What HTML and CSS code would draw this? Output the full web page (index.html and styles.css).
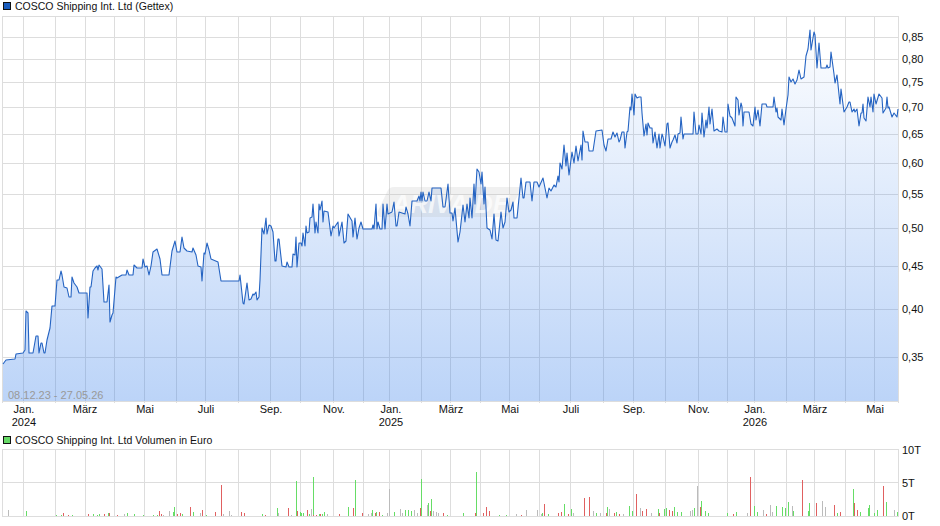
FILE: index.html
```html
<!DOCTYPE html>
<html>
<head>
    <title>COSCO Shipping Int. Ltd (Gettex)</title>
    <meta name="viewport" content="width=device-width, initial-scale=1">
    <link rel="stylesheet" href="styles.css">
</head>
<body>
    <main class="page">
        <div class="legend legendPrice">
            <span class="swatch swatchBlue"></span>
            <span>COSCO Shipping Int. Ltd (Gettex)</span>
        </div>
        <svg class="chart chartPrice" viewBox="0 16 940 418">
            <defs>
                <linearGradient id="areaFill" gradientUnits="userSpaceOnUse" x1="0" y1="16" x2="0" y2="401">
                    <stop offset="0" stop-color="#3f84eb" stop-opacity="0"></stop>
                    <stop offset="1" stop-color="#3f84eb" stop-opacity="0.35"></stop>
                </linearGradient>
            </defs>
            <g id="priceGrid" class="grid"></g>
            <path id="priceArea" class="area"></path>
            <g class="watermark">
                <path class="watermarkBand" d="M394 187H522L507 217H382Q376 217 378 211L387 192Q389 187 394 187Z"></path>
                <text class="watermarkText" x="392" y="213">ARIVA.DE</text>
            </g>
            <path id="priceLine" class="line"></path>
            <text class="dateRange" x="8" y="399">08.12.23 - 27.05.26</text>
            <g class="axisY">
                <text x="902" y="41">0,85</text>
                <text x="902" y="63">0,80</text>
                <text x="902" y="86">0,75</text>
                <text x="902" y="111">0,70</text>
                <text x="902" y="138">0,65</text>
                <text x="902" y="167">0,60</text>
                <text x="902" y="198">0,55</text>
                <text x="902" y="232">0,50</text>
                <text x="902" y="270">0,45</text>
                <text x="902" y="313">0,40</text>
                <text x="902" y="361">0,35</text>
            </g>
            <g class="axisX">
                <text x="24" y="413">Jan.</text>
                <text x="24" y="426">2024</text>
                <text x="85" y="413">März</text>
                <text x="145" y="413">Mai</text>
                <text x="206" y="413">Juli</text>
                <text x="271" y="413">Sep.</text>
                <text x="334" y="413">Nov.</text>
                <text x="391" y="413">Jan.</text>
                <text x="391" y="426">2025</text>
                <text x="451" y="413">März</text>
                <text x="510" y="413">Mai</text>
                <text x="571" y="413">Juli</text>
                <text x="634" y="413">Sep.</text>
                <text x="699" y="413">Nov.</text>
                <text x="755" y="413">Jan.</text>
                <text x="755" y="426">2026</text>
                <text x="815" y="413">März</text>
                <text x="875" y="413">Mai</text>
            </g>
        </svg>
        <div class="legend legendVolume">
            <span class="swatch swatchGreen"></span>
            <span>COSCO Shipping Int. Ltd Volumen in Euro</span>
        </div>
        <svg class="chart chartVolume" viewBox="0 446 940 80">
            <g id="volumeGrid" class="grid"></g>
            <path id="barsGray" class="bars barsGray"></path>
            <path id="barsGreen" class="bars barsGreen"></path>
            <path id="barsRed" class="bars barsRed"></path>
            <g class="axisY">
                <text x="902" y="454">10T</text>
                <text x="902" y="487">5T</text>
                <text x="902" y="520">0T</text>
            </g>
        </svg>
    </main>
    <script src="script.js"></script>
</body>
</html>
```

FILE: styles.css
```css
body {
    background-color: white;
    color: #111;
    font-family: "Liberation Sans", Arial, sans-serif;
    font-size: 10.5px;
    margin: 0;
}

.page {
    display: flex;
    flex-direction: column;
    width: 940px;
}

.legend {
    display: flex;
    align-items: center;
    gap: 4px;
    padding-left: 3px;
    box-sizing: border-box;
}

.legendPrice {
    height: 16px;
    padding-bottom: 4px;
}

.legendVolume {
    height: 12px;
}

.swatch {
    width: 6px;
    height: 6px;
    border: 1px solid #111;
}

.swatchBlue {
    background-color: #1a5dbe;
}

.swatchGreen {
    background-color: #66d966;
}

.chart {
    display: block;
    width: 940px;
    overflow: visible;
}

.chartPrice {
    height: 418px;
}

.chartVolume {
    height: 80px;
}

.grid line {
    stroke: #ddd;
    stroke-width: 1;
    shape-rendering: crispEdges;
}

.area {
    fill: url(#areaFill);
}

.line {
    fill: none;
    stroke: #2463c2;
    stroke-width: 1.1;
    stroke-linejoin: round;
}

.bars {
    fill: none;
    stroke-width: 1;
    shape-rendering: crispEdges;
}

.barsGray {
    stroke: #bbb;
}

.barsGreen {
    stroke: #66dd66;
}

.barsRed {
    stroke: #e06060;
}

.watermarkBand {
    fill: rgba(185, 185, 185, 0.22);
}

.watermarkText {
    fill: rgba(255, 255, 255, 0.7);
    font-size: 25px;
    font-style: italic;
    font-weight: bold;
}

.dateRange {
    fill: #999;
    font-size: 11px;
}

.axisY text,
.axisX text {
    fill: #111;
    font-size: 11px;
}

.axisX text {
    text-anchor: middle;
}
```

FILE: script.js
```js
const gridX = [2, 23, 55, 85, 114, 144, 176, 205, 238, 270, 300, 333, 363, 389, 421, 450, 480, 509, 539, 570, 603, 633, 665, 698, 727, 754, 786, 814, 845, 874, 898];
const priceGridY = [16, 37, 59, 82, 107, 134, 163, 194, 228, 266, 309, 357, 401];
const volumeGridY = [449, 482, 516];

const pricePoints = [
    3,364, 6,360, 15,359, 16,354, 23,353, 25,350, 26,311, 28,313, 29,353, 33,353, 36,336, 38,336, 39,353, 41,343, 42,343, 44,353, 45,353, 47,340, 50,328, 52,306,
    55,306, 57,280, 59,280, 61,271, 62,275, 64,287, 67,288, 69,297, 71,297, 72,277, 74,283, 77,287, 79,293, 87,293, 88,318, 90,287, 91,287, 93,271, 95,268, 97,266,
    98,270, 99,265, 102,269, 104,302, 107,302, 109,285, 110,322, 112,315, 113,313, 116,277, 117,278, 122,275, 126,275, 127,270, 129,275, 133,275, 134,265, 137,268, 142,268, 143,259,
    145,267, 147,266, 149,275, 151,266, 153,252, 157,249, 160,259, 162,275, 169,275, 172,251, 175,241, 177,252, 180,252, 182,237, 184,248, 187,251, 192,252, 193,248, 196,255, 198,266,
    201,267, 202,281, 204,253, 205,254, 207,243, 209,250, 211,259, 218,262, 221,281, 239,281, 240,275, 243,303, 244,304, 247,283, 249,300, 251,299, 253,294, 254,295, 256,292, 257,300,
    259,297, 260,280, 262,228, 264,234, 266,218, 267,234, 269,225, 271,226, 273,232, 275,261, 276,261, 278,239, 279,239, 282,266, 286,267, 287,262, 289,267, 292,267, 293,254, 295,255,
    296,237, 297,267, 299,243, 301,243, 302,246, 303,233, 305,246, 306,226, 307,233, 309,232, 310,218, 312,217, 313,204, 315,233, 316,222, 318,233, 319,204, 320,210, 322,201, 323,222,
    324,211, 328,212, 331,236, 333,226, 334,228, 336,225, 338,222, 339,236, 342,222, 344,243, 346,241, 348,214, 352,221, 353,237, 355,218, 357,239, 359,228, 361,222, 363,229, 372,229,
    373,225, 374,229, 376,204, 377,229, 378,222, 380,229, 382,229, 383,204, 385,229, 387,204, 388,214, 392,212, 394,202, 396,226, 397,226, 399,212, 405,214, 406,207, 408,214, 410,226,
    412,201, 417,201, 419,196, 420,201, 421,192, 422,201, 423,192, 425,201, 427,201, 429,192, 431,201, 432,188, 441,188, 443,207, 445,207, 448,184, 450,213, 452,213, 453,221, 455,208,
    458,242, 460,232, 463,205, 465,222, 467,204, 469,218, 470,198, 472,218, 474,184, 475,204, 477,169, 479,172, 481,184, 482,172, 484,204, 485,187, 487,228, 490,230, 492,239, 494,214,
    496,240, 498,241, 501,212, 503,228, 505,222, 507,198, 509,212, 511,210, 513,202, 514,218, 517,218, 521,178, 523,198, 524,198, 526,182, 530,182, 532,201, 534,182, 537,182, 539,187,
    543,178, 547,198, 549,188, 551,191, 554,185, 556,187, 558,176, 559,182, 560,163, 562,169, 564,145, 566,166, 567,153, 569,175, 572,152, 574,163, 576,146, 578,161, 581,145, 582,160,
    583,131, 585,142, 588,142, 589,151, 593,151, 596,131, 602,130, 604,145, 606,151, 608,139, 611,139, 613,132, 615,137, 617,133, 619,142, 620,140, 622,132, 624,132, 625,148, 627,132,
    628,131, 630,107, 631,110, 632,94, 634,115, 635,94, 637,98, 639,97, 641,97, 642,113, 644,136, 646,124, 647,135, 648,123, 650,128, 652,128, 653,143, 655,132, 657,148, 659,134,
    660,148, 662,134, 663,137, 665,146, 667,124, 668,123, 670,148, 672,142, 673,140, 675,135, 677,143, 678,134, 680,133, 681,117, 683,139, 684,134, 693,134, 694,112, 696,134, 698,134,
    699,125, 701,134, 702,113, 704,137, 706,120, 707,128, 709,107, 710,124, 712,109, 714,131, 717,129, 719,131, 722,132, 723,117, 725,132, 727,132, 728,104, 730,116, 732,118, 735,126,
    736,97, 738,100, 739,115, 741,103, 742,107, 743,126, 744,112, 749,112, 751,124, 753,126, 755,107, 756,120, 758,110, 760,126, 762,104, 766,104, 767,107, 773,107, 774,97, 776,112,
    777,108, 778,117, 781,120, 782,109, 784,125, 786,109, 788,95, 789,77, 791,82, 793,79, 795,84, 797,80, 799,70, 801,79, 804,77, 806,56, 808,49, 810,30, 811,50, 814,32,
    815,35, 817,68, 819,43, 821,68, 826,68, 827,65, 828,68, 830,67, 831,52, 834,74, 835,83, 837,75, 840,104, 841,89, 844,112, 847,107, 849,102, 850,102, 852,112, 854,109,
    855,112, 857,109, 859,126, 861,113, 862,113, 863,104, 864,118, 866,121, 868,97, 870,107, 871,97, 873,112, 874,94, 876,104, 879,94, 882,98, 883,113, 886,108, 887,97, 888,108,
    889,107, 892,117, 894,113, 897,117, 898,109
];

// x, height pairs
const greenBars = [
    26,5, 56,1, 61,1, 72,1, 93,2, 97,1, 99,2, 108,3, 127,3, 134,2, 143,1, 153,1, 157,1, 173,4, 174,9, 182,2, 193,4, 206,1, 262,2, 277,8, 296,35, 300,4, 301,3, 303,3, 309,2, 313,39, 319,2,
    322,2, 324,4, 348,9, 355,36, 372,6, 376,4, 382,1, 394,4, 405,6, 408,6, 411,5, 421,37, 428,13, 431,17, 447,1, 463,3, 476,44, 499,1, 506,1, 542,3, 548,2, 564,12, 571,7, 596,3, 607,9, 616,4, 629,10,
    632,5, 658,7, 664,7, 666,8, 674,9, 677,4, 681,4, 694,8, 701,15, 705,5, 708,3, 727,3, 736,4, 754,10, 757,4, 776,10, 782,9, 785,8, 788,14, 793,5, 808,5, 809,13, 837,3, 853,27, 860,4, 868,8, 869,11, 874,3, 877,6, 886,14, 897,4
];
const redBars = [
    63,3, 68,1, 88,2, 104,2, 109,3, 117,1, 159,5, 161,2, 177,2, 180,3, 190,9, 202,6, 215,4, 221,31, 241,4, 244,3, 265,1, 288,8, 297,5, 307,6, 313,1, 316,1,
    320,2, 339,2, 353,8, 362,3, 375,3, 379,4, 420,8, 430,5, 443,3, 475,3, 483,3, 486,9, 489,5, 521,1, 544,12, 558,3, 561,4, 568,2, 584,18, 589,19, 606,3, 614,3, 619,2,
    636,22, 642,5, 646,7, 659,3, 669,6, 672,5, 700,9, 733,2, 750,39, 766,2, 802,36, 816,13, 834,11, 840,4, 854,13, 857,6, 883,30
];
const grayBars = [
    8,6, 124,2, 163,1, 169,5, 200,3, 223,2, 229,5, 231,1, 278,3, 291,1, 311,7,
    327,2, 368,2, 371,3, 387,3, 389,27, 400,7, 402,3, 414,6, 417,3, 427,11, 433,5, 436,4, 438,3, 516,2, 526,6, 537,6, 541,2, 573,3, 593,5, 600,3, 609,7, 623,2,
    640,8, 651,3, 690,5, 692,6, 697,30, 747,3, 763,6, 770,11, 772,4, 792,10, 822,15, 825,9, 894,6
];

function drawGrid(id, linesY, tickBottom) {
    const group = document.getElementById(id);
    const top = linesY[0] + 0.5;
    const right = gridX[gridX.length - 1] + 0.5;
    let markup = "";
    gridX.forEach(x => {
        markup += `<line x1="${x + 0.5}" x2="${x + 0.5}" y1="${top}" y2="${tickBottom}"></line>`;
    });
    linesY.forEach(y => {
        markup += `<line x1="2" x2="${right + 0.5}" y1="${y + 0.5}" y2="${y + 0.5}"></line>`;
    });
    group.innerHTML = markup;
}

function drawPrice() {
    let line = "";
    for (let i = 0; i < pricePoints.length; i += 2) {
        line += (i === 0 ? "M" : "L") + pricePoints[i] + " " + pricePoints[i + 1];
    }
    document.getElementById("priceLine").setAttribute("d", line);
    document.getElementById("priceArea").setAttribute("d", line + "L898 401L3 401Z");
}

function drawBars(id, bars) {
    let d = "";
    for (let i = 0; i < bars.length; i += 2) {
        d += "M" + (bars[i] + 0.5) + " 516V" + (516 - bars[i + 1]);
    }
    document.getElementById(id).setAttribute("d", d);
}

drawGrid("priceGrid", priceGridY, 403);
drawGrid("volumeGrid", volumeGridY, 517);
drawPrice();
drawBars("barsGray", grayBars);
drawBars("barsGreen", greenBars);
drawBars("barsRed", redBars);
```
